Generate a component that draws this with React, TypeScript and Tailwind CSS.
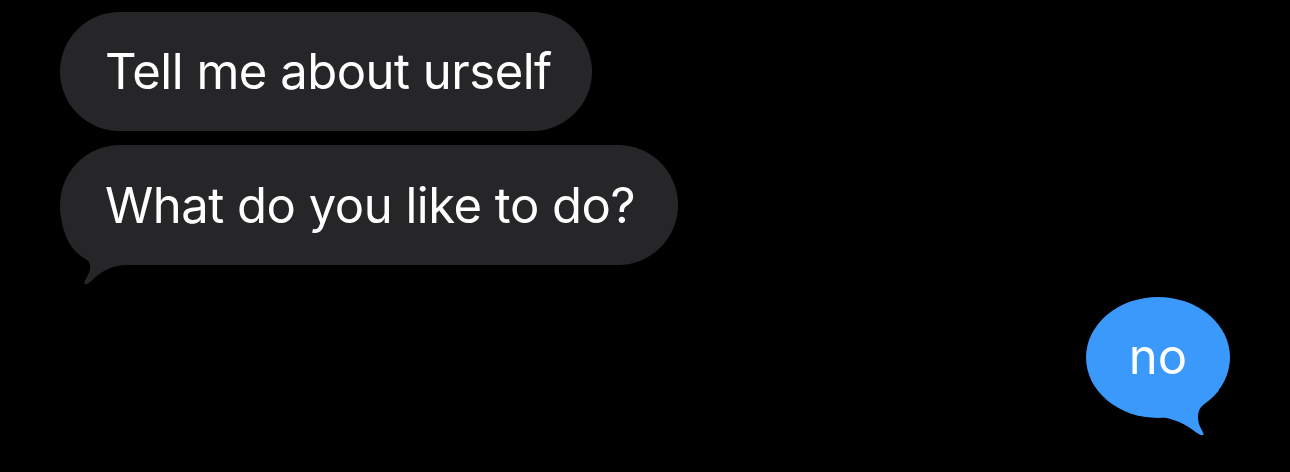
export default function App() {
  return (
    <div
      className="w-full h-[472px] bg-black flex flex-col pt-3 px-[60px] overflow-hidden"
      style={{ fontFamily: "Inter, 'Liberation Sans', sans-serif" }}
    >
      {/* incoming */}
      <div className="self-start h-[119px] pl-[45px] pr-[40px] rounded-full bg-[#262628] flex items-center">
        <span className="text-white text-[49px] leading-none tracking-[-0.5px]">Tell me about urself</span>
      </div>
      <div className="relative self-start mt-[14px] h-[120px] pl-[45px] pr-[43px] rounded-full bg-[#262628] flex items-center">
        <span className="relative z-10 text-white text-[49px] leading-none tracking-[-0.5px]">What do you like to do?</span>
        <svg
          className="absolute left-0 top-[120px] overflow-visible"
          width="70"
          height="24"
          viewBox="0 0 70 24"
        >
          <path
            d="M 0 -60 C 1 -32 10 -14 27 -5 C 31 -2 31 4 28 10 C 26 14 23 18 25 19 C 28 20 32 15 38 10 C 45 5 52 1 65 0 L 65 -60 Z"
            fill="#262628"
          />
        </svg>
      </div>

      {/* outgoing */}
      <div className="relative self-end mt-[32px] w-[144px] h-[121px] rounded-[50%] bg-[#3b99fc] flex items-center justify-center">
        <span className="relative z-10 text-white text-[49px] leading-none pb-[2px]">no</span>
        <svg
          className="absolute left-[94px] top-[103px] overflow-visible"
          width="50"
          height="40"
          viewBox="0 0 50 40"
        >
          <path
            d="M -40 -14 L -40 13 C -20 16 -5 18 10 28 C 16 32 20 36 23 35 C 25 34 21 30 19 24 C 17 17 18 10 22 6 C 28 1 35 -4 39 -10 L 30 -14 Z"
            fill="#3b99fc"
          />
        </svg>
      </div>
    </div>
  )
}
